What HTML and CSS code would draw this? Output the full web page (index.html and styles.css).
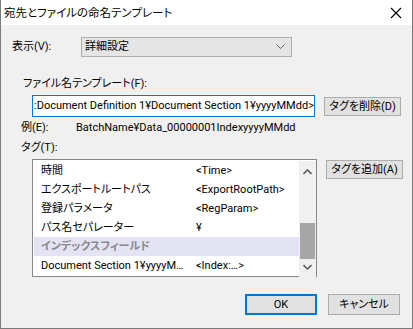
FILE: index.html
```html
<!DOCTYPE html>
<html lang="ja">
<head>
<meta charset="UTF-8">
<title>宛先とファイルの命名テンプレート</title>
<link rel="stylesheet" href="styles.css">
</head>
<body>
<div class="window">
  <div class="titlebar">
    <span class="title">宛先とファイルの命名テンプレート</span>
    <svg class="close" width="12" height="12" viewBox="0 0 12 12">
      <path d="M1 1 L11 11 M11 1 L1 11" stroke="#000" stroke-width="1.1" fill="none"/>
    </svg>
  </div>
  <div class="content">
    <div class="view-row">
      <label class="view-label">表示(V):</label>
      <div class="combo">
        <span>詳細設定</span>
        <svg width="9" height="6" viewBox="0 0 9 6"><path d="M0.5 0.5 L4.5 4.5 L8.5 0.5" stroke="#606060" stroke-width="1" fill="none"/></svg>
      </div>
    </div>

    <div class="label-template">ファイル名テンプレート(F):</div>
    <div class="field-row">
      <div class="textbox"><span class="caret">:Document Definition 1¥Document Section 1¥yyyyMMdd&gt;</span></div>
      <button class="btn side">タグを削除(D)</button>
    </div>

    <div class="example-row">
      <span class="example-label">例(E):</span>
      <span class="example-value">BatchName¥Data_00000001IndexyyyyMMdd</span>
    </div>

    <div class="label-tags">タグ(T):</div>
    <div class="field-row tags">
      <div class="listbox">
        <div class="rows">
          <div class="row"><span class="c1">時間</span><span class="c2">&lt;Time&gt;</span></div>
          <div class="row"><span class="c1">エクスポートルートパス</span><span class="c2">&lt;ExportRootPath&gt;</span></div>
          <div class="row"><span class="c1">登録パラメータ</span><span class="c2">&lt;RegParam&gt;</span></div>
          <div class="row"><span class="c1">パス名セパレーター</span><span class="c2">¥</span></div>
          <div class="row group"><span class="c1">インデックスフィールド</span></div>
          <div class="row"><span class="c1">Document Section 1¥yyyyM…</span><span class="c2">&lt;Index:…&gt;</span></div>
        </div>
        <div class="scrollbar">
          <svg width="9" height="6" viewBox="0 0 9 6"><path d="M0.5 5 L4.5 1 L8.5 5" stroke="#606060" stroke-width="1.6" fill="none"/></svg>
          <div class="track"><div class="thumb"></div></div>
          <svg width="9" height="6" viewBox="0 0 9 6"><path d="M0.5 1 L4.5 5 L8.5 1" stroke="#606060" stroke-width="1.6" fill="none"/></svg>
        </div>
      </div>
      <button class="btn side add">タグを追加(A)</button>
    </div>

    <div class="footer">
      <button class="btn ok">OK</button>
      <button class="btn">キャンセル</button>
    </div>
  </div>
</div>
</body>
</html>
```

FILE: styles.css
```css
:root {
  --face: #f0f0f0;
  --btn: #e1e1e1;
  --btn-border: #adadad;
  --accent: #0078d7;
}
* { box-sizing: border-box; }
body {
  margin: 0;
  background: var(--face);
  font-family: Roboto, "Noto Sans CJK JP", sans-serif;
  font-size: 11px;
  font-feature-settings: "palt" 1;
  color: #000;
}
.window {
  width: 413px; height: 329px;
  background: var(--face);
  border: 1px solid #7a7a7a; border-top: none;
}
.titlebar {
  height: 25px; background: #fff;
  display: flex; align-items: center; justify-content: space-between;
  padding: 0 10px 0 3px;
}
.title { line-height: 16px; font-size: 11.5px; }
.close { margin-top: 1px; }
.content { padding: 12px 0 0 11px; }

.view-row { display: flex; align-items: center; }
.view-label { width: 69px; line-height: 16px; }
.combo {
  width: 211px; height: 20px;
  background: #e5e5e5; border: 1px solid var(--btn-border);
  display: flex; align-items: center; justify-content: space-between;
  padding: 0 6px 0 3px; line-height: 16px;
}

.label-template { margin: 19px 0 0 11px; line-height: 16px; }
.field-row { display: flex; align-items: flex-start; margin: 3px 0 0 20px; }
.textbox {
  width: 283px; height: 22px;
  background: #fff; border: 1px solid var(--accent);
  padding: 0 0 0 1px; line-height: 19px;
  white-space: nowrap; overflow: hidden;
}
.caret { border-right: 1px solid #000; padding-right: 1px; }
.btn {
  font: inherit; color: #000;
  background: var(--btn); border: 1px solid var(--btn-border);
  height: 21px; width: 72px; padding: 0; line-height: 17px;
  border-radius: 0; white-space: nowrap;
}
.side { width: 77px; height: 19px; line-height: 15px; margin: 2px 0 0 9px; }

.example-row { display: flex; margin: 3px 0 0 9px; line-height: 16px; }
.example-label { width: 55px; }
.label-tags { margin: 4px 0 0 9px; line-height: 16px; }
.tags { margin-top: 3px; }
.add { margin-top: 1px; }

.listbox {
  width: 285px; height: 118px;
  background: #fff; border: 1px solid #828790;
  display: flex; padding: 1px 0 0 1px;
}
.rows { flex: 1; min-width: 0; }
.row { height: 19px; display: flex; align-items: center; padding-left: 7px; line-height: 16px; }
.row.group { background: #e3e3f3; color: #8a8a8a; font-weight: bold; }
.c1 { flex: 0 0 155px; white-space: nowrap; padding-right: 8px; }
.scrollbar {
  flex: 0 0 17px; height: 116px;
  background: var(--face);
  display: flex; flex-direction: column; align-items: center;
  padding: 8px 0 7px;
}
.track { flex: 1; width: 15px; position: relative; margin: 0 0 5px; }
.thumb { position: absolute; left: 0; right: 0; bottom: 0; height: 36px; background: #a6a6a6; }

.footer { display: flex; justify-content: flex-end; gap: 11px; margin: 17px 12px 0 0; }
.ok { border: 2px solid var(--accent); line-height: 17px; }
```
